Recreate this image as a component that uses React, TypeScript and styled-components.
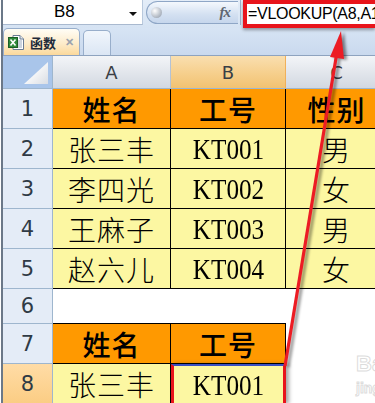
import React from "react";
import styled, { createGlobalStyle } from "styled-components";

const Global = createGlobalStyle`
  html, body { margin: 0; padding: 0; background: #fff; }
  body { width: 375px; height: 403px; overflow: hidden; font-family: "Liberation Sans", Arial, sans-serif; }
`;

const Window = styled.div`
  position: relative;
  width: 375px;
  height: 403px;
  overflow: hidden;
  background: #fff;
`;

const Frame = styled.div`
  margin-left: 1px;
  border-left: 2px solid #6b7888;
  height: 100%;
  display: flex;
  flex-direction: column;
`;

const FormulaBar = styled.div`
  height: 28px;
  display: flex;
  align-items: flex-start;
  background: linear-gradient(#e4edf8, #d6e3f3);
`;

const NameBox = styled.div`
  width: 140px;
  height: 25px;
  box-sizing: border-box;
  background: #fff;
  border-right: 1px solid #b9c9dd;
  border-bottom: 1px solid #a9b9cf;
  display: flex;
  align-items: center;
  padding-left: 51px;
  position: relative;
  font-size: 17px;
  color: #000;
`;

const DropArrow = styled.span`
  position: absolute;
  right: 5px;
  top: 12px;
  width: 0;
  height: 0;
  border-left: 4px solid transparent;
  border-right: 4px solid transparent;
  border-top: 4px solid #111;
`;

const Splitter = styled.div`
  margin-left: 3px;
  margin-top: 1px;
  width: 92px;
  height: 23px;
  box-sizing: border-box;
  border: 1px solid #8ea6c6;
  border-right: none;
  border-radius: 12px 0 0 12px;
  background: linear-gradient(#f4f8fd, #d3e0f1 60%, #c6d6ec);
  display: flex;
  align-items: center;
  justify-content: space-between;
  padding: 0 8px 0 4px;
`;

const Knob = styled.span`
  width: 11px;
  height: 11px;
  border-radius: 50%;
  background: radial-gradient(circle at 35% 35%, #ffffff, #b7bec8 60%, #8c96a3);
`;

const Fx = styled.span`
  font-family: "Liberation Serif", serif;
  font-style: italic;
  font-weight: bold;
  font-size: 15px;
  color: #5f6670;
  letter-spacing: -1px;
`;

const Sep = styled.div`
  width: 1px;
  height: 25px;
  margin-left: 2px;
  background: #9fb2cc;
`;

const FormulaInput = styled.div`
  margin-left: 2px;
  flex: 1;
  height: 28px;
  box-sizing: border-box;
  border: 4px solid #e8141b;
  border-right: none;
  background: #fff;
  box-shadow: 0 2px 3px rgba(0, 0, 0, 0.35);
  display: flex;
  align-items: center;
  padding-left: 1px;
  font-size: 16px;
  letter-spacing: -0.3px;
  white-space: nowrap;
  overflow: hidden;
  color: #000;
  position: relative;
  z-index: 2;
`;

const TabBar = styled.div`
  height: 29px;
  border-bottom: 1px solid #8ea3bf;
  background: linear-gradient(#d7e4f4, #c9d9ee);
  display: flex;
  align-items: flex-end;
  gap: 3px;
`;

const Tab = styled.div<{ $active?: boolean }>`
  box-sizing: border-box;
  height: ${(p) => (p.$active ? 27 : 25)}px;
  width: ${(p) => (p.$active ? 77 : 28)}px;
  border: 1px solid #98aecb;
  border-bottom: none;
  border-radius: 5px 5px 0 0;
  background: ${(p) =>
    p.$active
      ? "linear-gradient(#fffdf6, #fdeccb 55%, #fbd99c)"
      : "linear-gradient(#f1f6fc, #dbe6f4)"};
  display: flex;
  align-items: center;
  padding-left: 4px;
  white-space: nowrap;
`;

const TabLabel = styled.span`
  margin-left: 5px;
  font-family: "Noto Sans CJK SC", sans-serif;
  font-size: 13px;
  font-weight: 700;
  color: #1e2a3a;
`;

const TabClose = styled.span`
  margin-left: 9px;
  font-size: 11px;
  font-weight: bold;
  color: #9aa3ae;
`;

const Sheet = styled.div`
  display: grid;
  grid-template-columns: 50px 118px 115px 102px;
  grid-template-rows: 33px repeat(5, 40px) 35px 40px 40px;
`;

const Corner = styled.div`
  position: relative;
  box-sizing: border-box;
  background: #a9c5ea;
  border-right: 1px solid #9eb6ce;
  border-bottom: 1px solid #9eb6ce;
  &::after {
    content: "";
    position: absolute;
    right: 4px;
    bottom: 4px;
    width: 24px;
    height: 22px;
    clip-path: polygon(100% 0, 100% 100%, 0 100%);
    background: linear-gradient(135deg, #ffffff 30%, #d9dde3);
  }
`;

const ColHead = styled.div<{ $sel?: boolean }>`
  box-sizing: border-box;
  border-right: 1px solid ${(p) => (p.$sel ? "#f0b05a" : "#b3c2d6")};
  border-bottom: 1px solid #9eb6ce;
  background: ${(p) =>
    p.$sel
      ? "linear-gradient(#f9dfb0, #f6cf8c 55%, #f2c272)"
      : "linear-gradient(#f3f5f8, #e1e5eb 55%, #d2d8e1)"};
  display: flex;
  align-items: center;
  justify-content: center;
  font-family: "DejaVu Sans", Verdana, sans-serif;
  font-size: 18px;
  color: #3a3f46;
`;

const RowHead = styled.div<{ $sel?: boolean }>`
  box-sizing: border-box;
  border-right: 1px solid #9eb6ce;
  border-bottom: 1px solid #9eb6ce;
  background: ${(p) => (p.$sel ? "linear-gradient(#ffdca6, #fbcd84)" : "#e4ecf7")};
  display: flex;
  align-items: center;
  justify-content: center;
  font-family: "DejaVu Sans", Verdana, sans-serif;
  font-size: 21px;
  color: #2f3a45;
`;

type Kind = "head" | "data" | "blank";

const Cell = styled.div<{ $kind: Kind; $r?: boolean; $b?: boolean; $focus?: boolean }>`
  position: relative;
  box-sizing: border-box;
  display: flex;
  align-items: center;
  justify-content: center;
  border-right: ${(p) => (p.$r ? "1px solid #000" : "none")};
  border-bottom: ${(p) => (p.$b ? "1px solid #000" : "none")};
  background: ${(p) =>
    p.$kind === "head" ? "#ff9900" : p.$kind === "data" ? "#fcf7a2" : "#fff"};
  font-family: "Noto Sans CJK SC", sans-serif;
  font-size: 28px;
  font-weight: ${(p) => (p.$kind === "head" ? 500 : 300)};
  letter-spacing: 1px;
  color: #000;
  ${(p) =>
    p.$focus
      ? `border-left: 3px solid #e8141b; border-right: 3px solid #e8141b; border-top: 2px solid #3a4fc4; box-shadow: 3px 0 4px rgba(0,0,0,0.35); z-index: 1;`
      : ""}
`;

const Code = styled.span`
  font-family: "Liberation Serif", "Times New Roman", serif;
  font-size: 30px;
  font-weight: 400;
  letter-spacing: 0;
  display: inline-block;
  transform: scaleX(0.84);
`;

const Overlay = styled.svg`
  position: absolute;
  left: 0;
  top: 0;
  width: 375px;
  height: 403px;
  pointer-events: none;
  z-index: 5;
`;

const Watermark = styled.div`
  position: absolute;
  left: 356px;
  top: 353px;
  display: flex;
  flex-direction: column;
  line-height: 1;
  color: rgba(255, 255, 255, 0.9);
  -webkit-text-stroke: 1px rgba(190, 190, 190, 0.55);
  font-family: "Liberation Sans", Arial, sans-serif;
  font-weight: bold;
  pointer-events: none;
  z-index: 4;
`;

const WmBig = styled.span`
  font-size: 22px;
`;

const WmSmall = styled.span`
  font-size: 14px;
  margin-top: 6px;
`;

const ExcelIcon = () => (
  <svg width="17" height="17" viewBox="0 0 17 17">
    <path d="M5 1.5h7l3.5 3.5v10.5H5z" fill="#fff" stroke="#6b7c93" />
    <path d="M12 1.5V5h3.5" fill="#e6ebf2" stroke="#6b7c93" />
    <path d="M8 7h6M8 9h6M8 11h6M8 13h6" stroke="#9aa9bd" strokeWidth="1" />
    <rect x="0.5" y="3.5" width="9" height="10" fill="#2f8a3a" stroke="#1c5e25" />
    <path d="M2.5 5.5l5 6M7.5 5.5l-5 6" stroke="#fff" strokeWidth="1.6" />
  </svg>
);

type CellSpec = { text: string; kind: Kind; latin?: boolean; r?: boolean; b?: boolean; focus?: boolean };

const rows: { n: number; cells: CellSpec[]; sel?: boolean }[] = [
  { n: 1, cells: [ { text: "姓名", kind: "head", r: true, b: true }, { text: "工号", kind: "head", r: true, b: true }, { text: "性别", kind: "head", r: true, b: true } ] },
  { n: 2, cells: [ { text: "张三丰", kind: "data", r: true, b: true }, { text: "KT001", kind: "data", latin: true, r: true, b: true }, { text: "男", kind: "data", r: true, b: true } ] },
  { n: 3, cells: [ { text: "李四光", kind: "data", r: true, b: true }, { text: "KT002", kind: "data", latin: true, r: true, b: true }, { text: "女", kind: "data", r: true, b: true } ] },
  { n: 4, cells: [ { text: "王麻子", kind: "data", r: true, b: true }, { text: "KT003", kind: "data", latin: true, r: true, b: true }, { text: "男", kind: "data", r: true, b: true } ] },
  { n: 5, cells: [ { text: "赵六儿", kind: "data", r: true, b: true }, { text: "KT004", kind: "data", latin: true, r: true, b: true }, { text: "女", kind: "data", r: true, b: true } ] },
  { n: 6, cells: [ { text: "", kind: "blank", b: true }, { text: "", kind: "blank", b: true }, { text: "", kind: "blank" } ] },
  { n: 7, cells: [ { text: "姓名", kind: "head", r: true, b: true }, { text: "工号", kind: "head", r: true, b: true }, { text: "", kind: "blank" } ] },
  { n: 8, sel: true, cells: [ { text: "张三丰", kind: "data", r: true }, { text: "KT001", kind: "data", latin: true, focus: true }, { text: "", kind: "blank" } ] },
];

export default function App() {
  return (
    <Window>
      <Global />
      <Frame>
        <FormulaBar>
          <NameBox>
            B8
            <DropArrow />
          </NameBox>
          <Splitter>
            <Knob />
            <Fx>fx</Fx>
          </Splitter>
          <Sep />
          <FormulaInput>=VLOOKUP(A8,A1:C5,2,0)</FormulaInput>
        </FormulaBar>
        <TabBar>
          <Tab $active>
            <ExcelIcon />
            <TabLabel>函数</TabLabel>
            <TabClose>✕</TabClose>
          </Tab>
          <Tab />
        </TabBar>
        <Sheet>
          <Corner />
          <ColHead>A</ColHead>
          <ColHead $sel>B</ColHead>
          <ColHead>C</ColHead>
          {rows.map((row) => (
            <React.Fragment key={row.n}>
              <RowHead $sel={row.sel}>{row.n}</RowHead>
              {row.cells.map((c, i) => (
                <Cell key={i} $kind={c.kind} $r={c.r} $b={c.b} $focus={c.focus}>
                  {c.latin ? <Code>{c.text}</Code> : c.text}
                </Cell>
              ))}
            </React.Fragment>
          ))}
        </Sheet>
      </Frame>
      <Watermark>
        <WmBig>Bai</WmBig>
        <WmSmall>jing</WmSmall>
      </Watermark>
      <Overlay viewBox="0 0 375 403">
        <defs>
          <filter id="sh" x="-50%" y="-10%" width="200%" height="120%">
            <feGaussianBlur stdDeviation="1.5" />
          </filter>
        </defs>
        <g opacity="0.45" filter="url(#sh)" transform="translate(3,1)">
          <line x1="285" y1="366" x2="337" y2="52" stroke="#000" strokeWidth="3" />
          <polygon points="341,31 330,57 344,59" fill="#000" />
        </g>
        <line x1="285" y1="366" x2="337" y2="52" stroke="#ec1c24" strokeWidth="3.2" />
        <polygon points="341,31 330,57 344,59" fill="#ec1c24" />
      </Overlay>
    </Window>
  );
}
